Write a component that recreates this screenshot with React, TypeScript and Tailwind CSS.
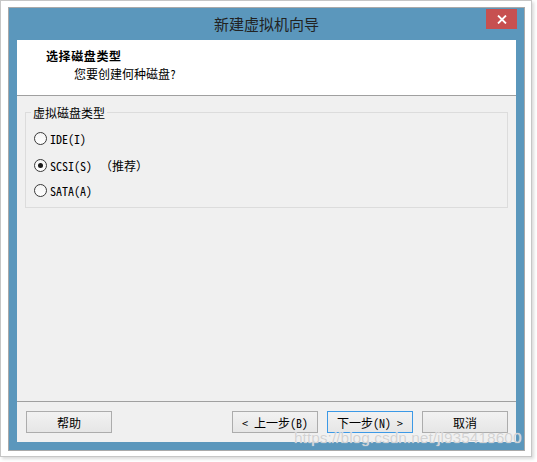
import React from "react";

const FONT = '"Noto Sans Mono CJK SC", "Noto Sans CJK SC", sans-serif';

function Radio({ label, checked, extra }: { label: string; checked?: boolean; extra?: string }) {
  return (
    <div className="flex h-[15px] items-center">
      <span className="flex h-[13px] w-[13px] items-center justify-center rounded-full border border-[#3a3a3a] bg-gradient-to-b from-[#f4f4f4] to-white">
        {checked && <span className="h-[5px] w-[5px] rounded-full bg-[#1a1a1a]" />}
      </span>
      <span className="ml-[3px] text-[12px] leading-[15px] text-black">{label}</span>
      {extra && <span className="ml-[8px] text-[12px] leading-[15px] text-black">{extra}</span>}
    </div>
  );
}

function Btn({ children, primary }: { children: React.ReactNode; primary?: boolean }) {
  return (
    <div
      className={
        "flex h-[22px] w-[86px] items-center justify-center border bg-gradient-to-b from-[#f2f2f2] to-[#e6e6e6] text-[12px] leading-[15px] text-black " +
        (primary ? "border-[#3c99e6]" : "border-[#acacac]")
      }
    >
      {children}
    </div>
  );
}

export default function App() {
  return (
    <div className="relative h-[462px] w-[537px] bg-white" style={{ fontFamily: FONT }}>
      <div className="h-[457px] w-[532px] border border-[#c6c6c6] bg-white pl-[7px] pt-[6px] shadow-[2px_2px_3px_rgba(0,0,0,0.15)]">
        <div className="flex h-[444px] w-[517px] flex-col border border-[#a9a9a9] bg-[#5b97bc]">
          {/* Title bar */}
          <div className="relative flex h-[32px] items-center justify-center">
            <span className="text-[15px] leading-[18px] text-[#222]" style={{ fontFamily: '"Noto Sans CJK SC", sans-serif' }}>
              新建虚拟机向导
            </span>
            <div className="absolute right-[7px] top-[1px] flex h-[20px] w-[31px] items-center justify-center bg-[#c75050]">
              <svg width="10" height="9" viewBox="0 0 10 9">
                <path d="M1 0.5 L9 8.5 M9 0.5 L1 8.5" stroke="white" strokeWidth="1.8" />
              </svg>
            </div>
          </div>
          {/* Content */}
          <div className="mx-[8px] flex h-[402px] flex-col bg-[#f0f0f0]">
            <div className="h-[56px] border-b border-[#a0a0a0] bg-white pl-[29px] pt-[8px]">
              <div className="text-[12px] font-bold leading-[16px] tracking-[0.6px] text-black" style={{ fontFamily: '"Noto Sans CJK SC", sans-serif' }}>
                选择磁盘类型
              </div>
              <div className="ml-[28px] mt-[2px] text-[12px] leading-[16px] text-black">您要创建何种磁盘?</div>
            </div>
            <div className="flex flex-1 flex-col">
              <fieldset className="mx-[8px] mt-[9px] border border-[#dcdcdc] pb-[9px] pl-[8px] pt-[11px]">
                <legend className="ml-[-3px] px-[2px] text-[12px] leading-[15px] text-black">虚拟磁盘类型</legend>
                <div className="flex flex-col">
                  <Radio label="IDE(I)" />
                  <div className="mt-[12px]">
                    <Radio label="SCSI(S)" checked extra="（推荐）" />
                  </div>
                  <div className="mt-[10px]">
                    <Radio label="SATA(A)" />
                  </div>
                </div>
              </fieldset>
              <div className="flex-1" />
              <div className="flex border-t border-[#a0a0a0] pb-[9px] pl-[9px] pr-[8px] pt-[9px]">
                <Btn>帮助</Btn>
                <div className="flex-1" />
                <div className="flex gap-[9px]">
                  <Btn>&lt; 上一步(B)</Btn>
                  <Btn primary>下一步(N) &gt;</Btn>
                  <Btn>取消</Btn>
                </div>
              </div>
            </div>
          </div>
        </div>
      </div>
      <div
        className="pointer-events-none absolute left-[294px] top-[428px] whitespace-nowrap text-[15.5px] leading-[20px] text-[#d2d2d2]"
        style={{ fontFamily: '"Liberation Sans", Arial, sans-serif', textShadow: "0 0 1px rgba(255,255,255,0.9)" }}
      >
        https://blog.csdn.net/jl935418600
      </div>
    </div>
  );
}
